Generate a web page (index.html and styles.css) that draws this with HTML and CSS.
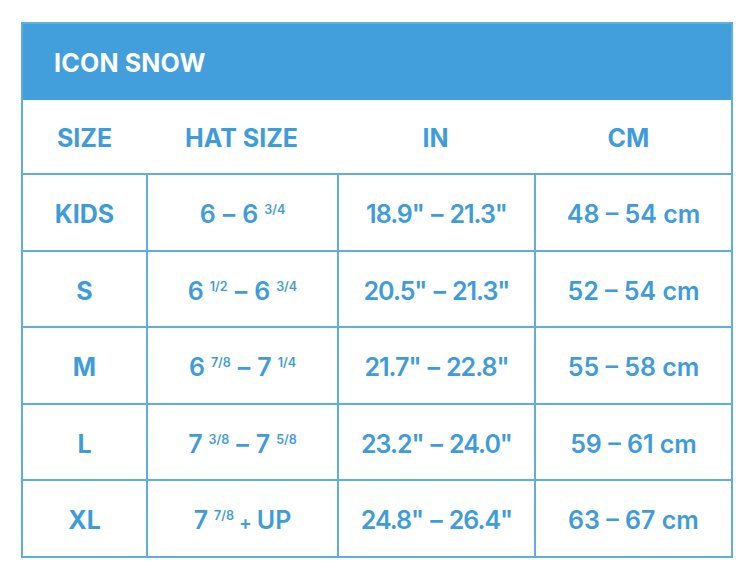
FILE: index.html
```html
<!DOCTYPE html>
<html>
<head>
<meta charset="utf-8">
<link rel="stylesheet" href="styles.css">
</head>
<body>
<div class="chart">
  <div class="title">ICON SNOW</div>
  <div class="head">
    <div class="hc">SIZE</div>
    <div class="hc">HAT SIZE</div>
    <div class="hc">IN</div>
    <div class="hc cm">CM</div>
  </div>
  <div class="grid">
    <div class="c size">KIDS</div>
    <div class="c">6<span class="dash">–</span>6<sup>3/4</sup></div>
    <div class="c inch">18.9"<span class="dash">–</span>21.3"</div>
    <div class="c">48 – 54 cm</div>

    <div class="c size">S</div>
    <div class="c">6<sup>1/2</sup><span class="dash">–</span>6<sup>3/4</sup></div>
    <div class="c inch">20.5"<span class="dash">–</span>21.3"</div>
    <div class="c">52 – 54 cm</div>

    <div class="c size">M</div>
    <div class="c">6<sup>7/8</sup><span class="dash">–</span>7<sup>1/4</sup></div>
    <div class="c inch">21.7"<span class="dash">–</span>22.8"</div>
    <div class="c">55 – 58 cm</div>

    <div class="c size">L</div>
    <div class="c">7<sup>3/8</sup><span class="dash">–</span>7<sup>5/8</sup></div>
    <div class="c inch">23.2"<span class="dash">–</span>24.0"</div>
    <div class="c">59 – 61 cm</div>

    <div class="c size">XL</div>
    <div class="c">7<sup>7/8</sup><span class="plus">+</span>UP</div>
    <div class="c inch">24.8"<span class="dash">–</span>26.4"</div>
    <div class="c">63 – 67 cm</div>
  </div>
</div>
</body>
</html>
```

FILE: styles.css
```css
html, body {
  margin: 0;
  padding: 0;
  background: #ffffff;
}
body {
  font-family: "Inter", "Noto Sans", sans-serif;
  color: #3f9cdb;
}
.chart {
  margin: 22px 0 0 21px;
  width: 712px;
  box-sizing: border-box;
  border: 2px solid #5caee4;
}
.title {
  height: 76px;
  background: #429fdb;
  color: #ffffff;
  font-weight: 700;
  font-size: 25px;
  letter-spacing: 0.2px;
  display: flex;
  align-items: center;
  padding-left: 31px;
  padding-top: 1px;
  box-sizing: border-box;
}
.head {
  display: grid;
  grid-template-columns: 123px 191px 197px 197px;
  height: 73px;
  border-bottom: 2px solid #5caee4;
}
.hc {
  display: flex;
  align-items: center;
  justify-content: center;
  font-size: 25px;
  font-weight: 700;
  padding-top: 2px;
}
.hc.cm {
  padding-right: 8px;
}
.grid {
  display: grid;
  grid-template-columns: 123px 189px 195px 195px;
  grid-auto-rows: 74.6px;
  gap: 2px;
  background: #5caee4;
}
.c {
  background: #ffffff;
  font-size: 25px;
  font-weight: 600;
  text-align: center;
  line-height: 79px;
  white-space: nowrap;
}
.c.size {
  font-weight: 700;
}
.c.inch {
  letter-spacing: -1px;
}
.dash {
  margin: 0 7px;
}
.plus {
  margin: 0 5px 0 5px;
  font-size: 19px;
}
sup {
  font-size: 12.5px;
  font-weight: 600;
  line-height: 0;
  vertical-align: 9px;
  margin-left: 6px;
  letter-spacing: 0;
}
```
